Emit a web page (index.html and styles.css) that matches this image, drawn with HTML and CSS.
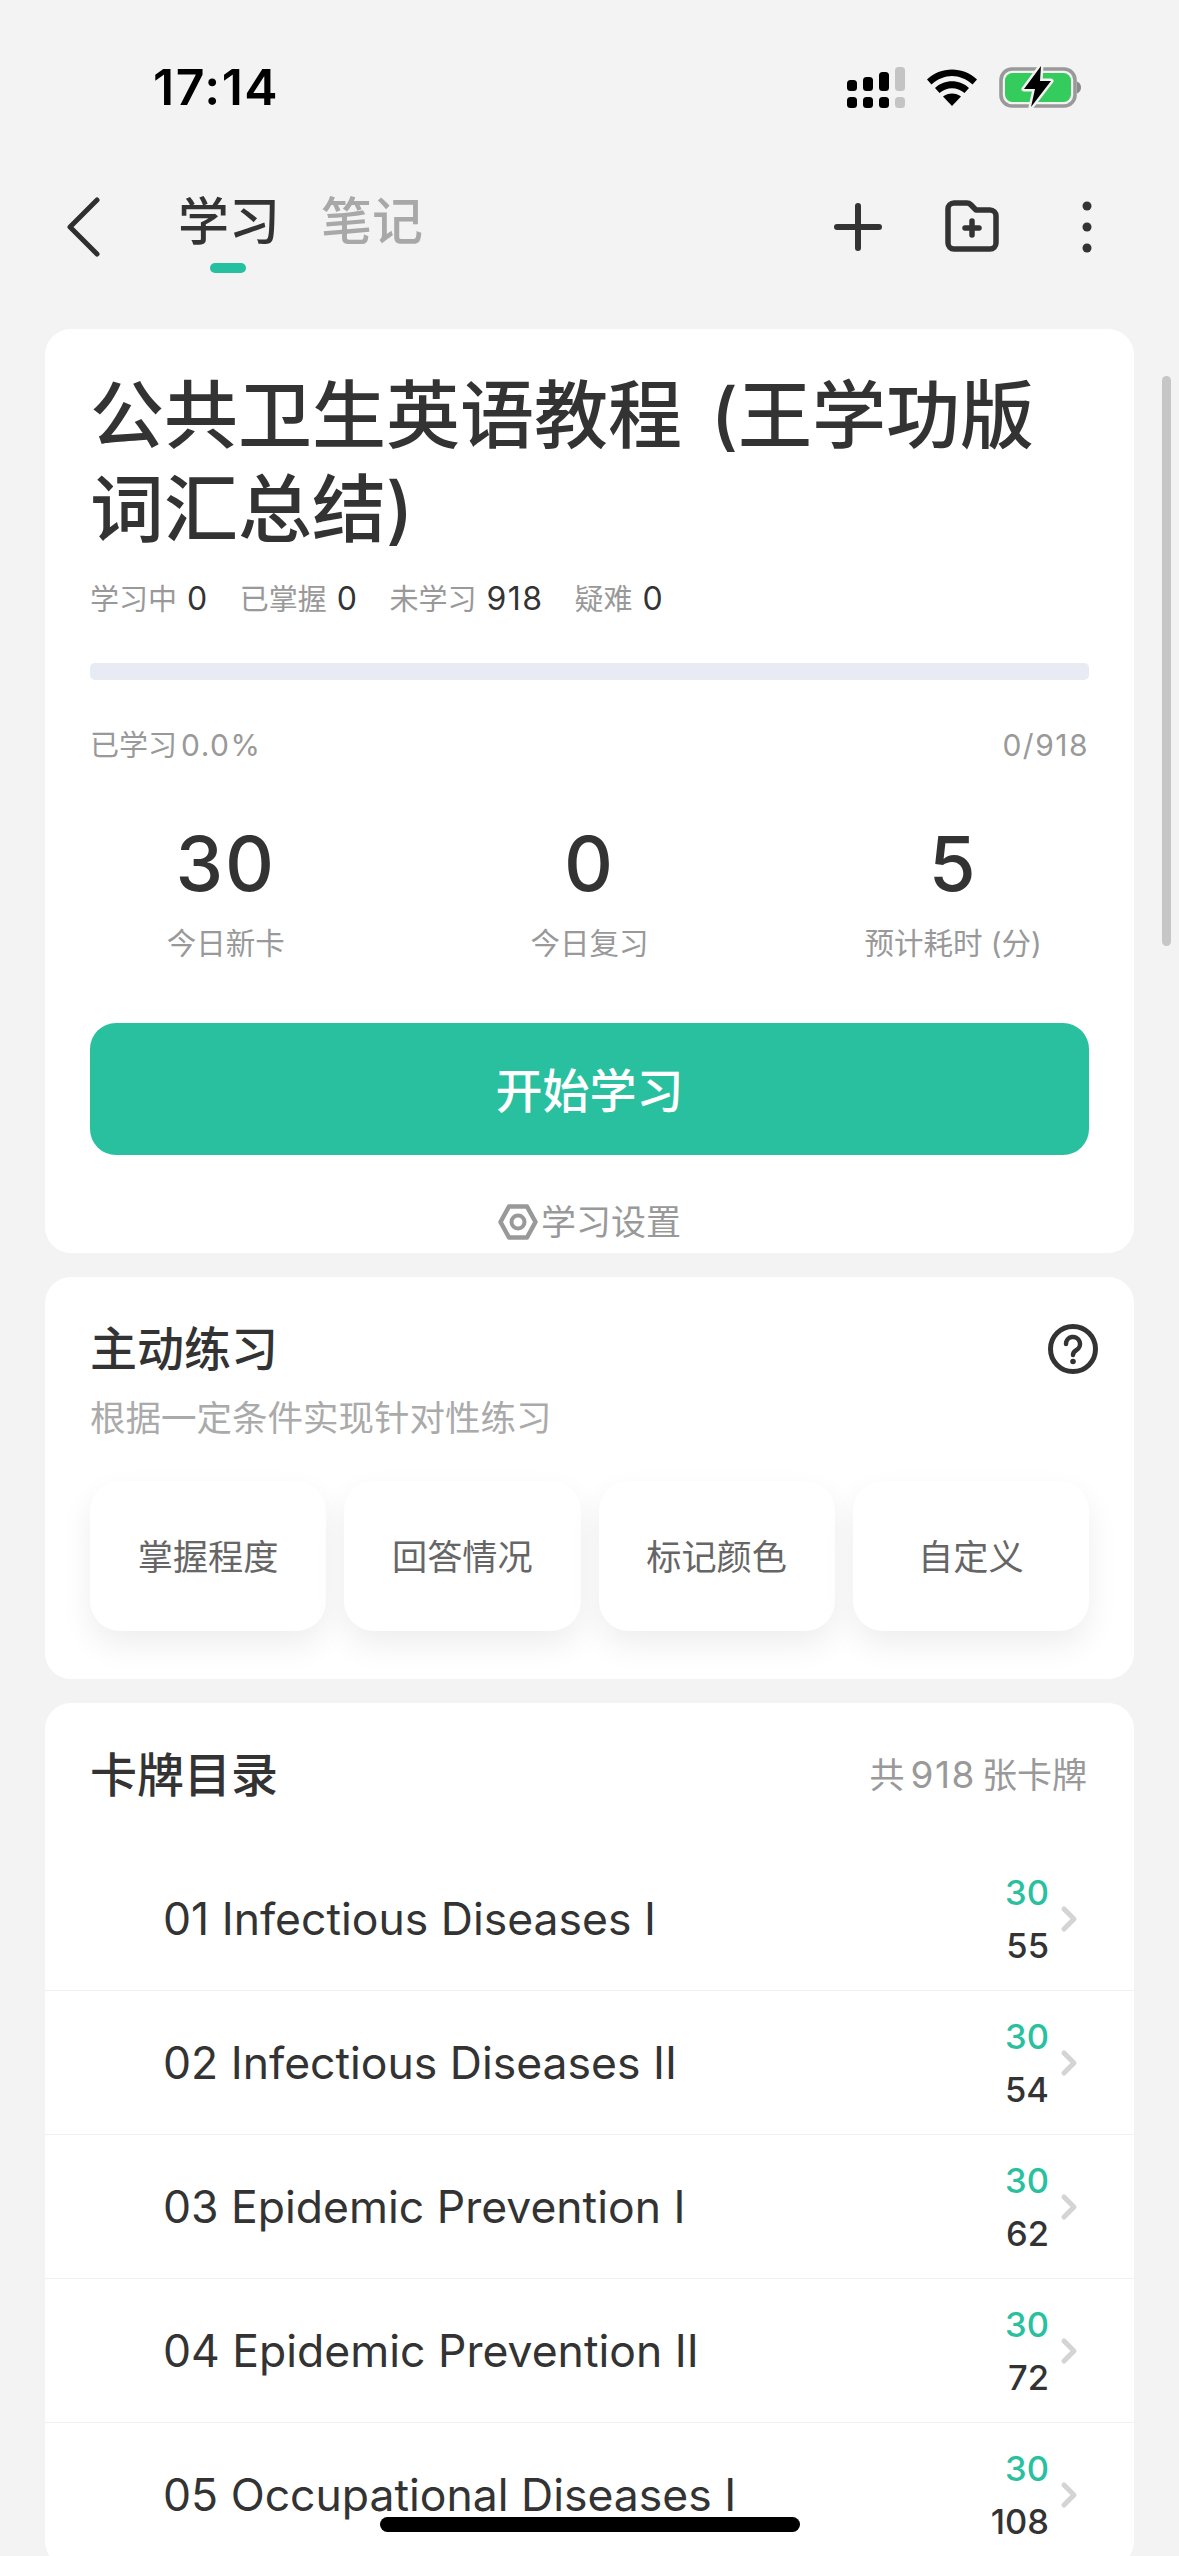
FILE: index.html
```html
<!DOCTYPE html>
<html lang="zh-CN">
<head>
<meta charset="utf-8">
<title>学习</title>
<link rel="stylesheet" href="styles.css">
</head>
<body>
<div class="screen">
  <header class="status">
    <span class="time">17:14</span>
    <div class="status-icons">
      <svg width="58" height="41" viewBox="0 0 58 41"><g fill="#000"><rect x="0" y="13" width="10" height="11" rx="3.5"/><rect x="16" y="10" width="10" height="14" rx="3.5"/><rect x="32" y="5" width="10" height="19" rx="3.5"/><rect x="0" y="30" width="10" height="11" rx="3.5"/><rect x="16" y="30" width="10" height="11" rx="3.5"/><rect x="32" y="30" width="10" height="11" rx="3.5"/></g><g fill="#c4c4c4"><rect x="48" y="0" width="10" height="24" rx="3.5"/><rect x="48" y="30" width="10" height="11" rx="3.5"/></g></svg>
      <svg width="50" height="37" viewBox="0 0 50 37"><g fill="#000"><path d="M0 10.500C13-3 37-3 50 10.500L45.500 15.500C33 4 17 4 4.500 15.500Z"/><path d="M8 19C17 10 33 10 42 19L37.500 24C30 17.500 20 17.500 12.500 24Z"/><path d="M16 27.500C21 23.500 29 23.500 34 27.500L25 37Z"/></g></svg>
      <svg width="82" height="43" viewBox="0 0 82 43"><rect x="2" y="3" width="74" height="37" rx="11" fill="none" stroke="#999" stroke-width="3.6"/><rect x="6" y="7" width="66" height="29" rx="7.5" fill="#34cc5c"/><path d="M78 15.500c2.500 1 4 3 4 6s-1.500 5-4 6z" fill="#8a8a8a"/><path d="M42 0 25 23h11l-4 18 20-26H41z" fill="#000" stroke="#f3f3f3" stroke-width="5" paint-order="stroke" stroke-linejoin="round"/></svg>
    </div>
  </header>

  <nav class="nav">
    <svg class="back" width="36" height="60" viewBox="0 0 36 60"><path d="M31 3 4 30l27 27" fill="none" stroke="#2f2f2f" stroke-width="5" stroke-linecap="round" stroke-linejoin="round"/></svg>
    <div class="tabs">
      <span class="tab tab-active">学习</span>
      <span class="tab">笔记</span>
    </div>
    <div class="nav-actions">
      <svg width="52" height="52" viewBox="0 0 52 52"><path d="M26 5v42M5 26h42" stroke="#333" stroke-width="6" stroke-linecap="round"/></svg>
      <svg width="54" height="54" viewBox="0 0 54 54"><path d="M3 9a6 6 0 0 1 6-6h13a5 5 0 0 1 3.600 1.500L31 10h14a6 6 0 0 1 6 6v27a6 6 0 0 1-6 6H9a6 6 0 0 1-6-6z" fill="none" stroke="#333" stroke-width="5.500" stroke-linejoin="round"/><path d="M27 21v14M20 28h14" stroke="#333" stroke-width="5.500" stroke-linecap="round"/></svg>
      <svg width="54" height="54" viewBox="0 0 54 54"><g fill="#333"><circle cx="27" cy="6" r="4.500"/><circle cx="27" cy="27" r="4.500"/><circle cx="27" cy="48" r="4.500"/></g></svg>
    </div>
  </nav>

  <main class="content">
    <section class="card card-study">
      <h1 class="title">公共卫生英语教程 (王学功版词汇总结)</h1>
      <div class="counts">
        <span class="count">学习中<b>0</b></span>
        <span class="count">已掌握<b>0</b></span>
        <span class="count">未学习<b>918</b></span>
        <span class="count">疑难<b>0</b></span>
      </div>
      <div class="progress"></div>
      <div class="progress-label"><span>已学习<span class="digits">0.0%</span></span><span class="digits">0/918</span></div>
      <div class="stats">
        <div class="stat"><div class="stat-num">30</div><div class="stat-label">今日新卡</div></div>
        <div class="stat"><div class="stat-num">0</div><div class="stat-label">今日复习</div></div>
        <div class="stat"><div class="stat-num">5</div><div class="stat-label">预计耗时 (分)</div></div>
      </div>
      <button class="start">开始学习</button>
      <div class="settings">
        <svg width="40" height="36" viewBox="0 0 40 36"><path d="M11 2.500h18L37.500 18 29 33.500H11L2.500 18z" fill="none" stroke="#999" stroke-width="4.500" stroke-linejoin="round"/><circle cx="20" cy="18" r="6.500" fill="none" stroke="#999" stroke-width="4"/></svg>
        <span>学习设置</span>
      </div>
    </section>

    <section class="card card-practice">
      <div class="head-row">
        <h2 class="heading">主动练习</h2>
        <svg class="help" width="50" height="50" viewBox="0 0 50 50"><circle cx="25" cy="25" r="22.500" fill="none" stroke="#333" stroke-width="5"/><path d="M18 20a7 7 0 1 1 10.500 6c-2.200 1.300-3.500 2.500-3.500 5" fill="none" stroke="#333" stroke-width="4.500" stroke-linecap="round"/><circle cx="25" cy="37.500" r="2.800" fill="#333"/></svg>
      </div>
      <p class="sub">根据一定条件实现针对性练习</p>
      <div class="tiles">
        <div class="tile">掌握程度</div>
        <div class="tile">回答情况</div>
        <div class="tile">标记颜色</div>
        <div class="tile">自定义</div>
      </div>
    </section>

    <section class="card card-list">
      <div class="head-row">
        <h2 class="heading">卡牌目录</h2>
        <span class="total">共<span class="total-num">918</span>张卡牌</span>
      </div>
      <ul class="decks">
        <li class="deck"><span class="deck-name">01 Infectious Diseases I</span><span class="nums"><span class="new">30</span><span class="all">55</span></span><svg class="chev" width="18" height="28" viewBox="0 0 18 28"><path d="M4 4l10 10L4 24" fill="none" stroke="#d4d4d4" stroke-width="5" stroke-linecap="round" stroke-linejoin="round"/></svg></li>
        <li class="deck"><span class="deck-name">02 Infectious Diseases II</span><span class="nums"><span class="new">30</span><span class="all">54</span></span><svg class="chev" width="18" height="28" viewBox="0 0 18 28"><path d="M4 4l10 10L4 24" fill="none" stroke="#d4d4d4" stroke-width="5" stroke-linecap="round" stroke-linejoin="round"/></svg></li>
        <li class="deck"><span class="deck-name">03 Epidemic Prevention I</span><span class="nums"><span class="new">30</span><span class="all">62</span></span><svg class="chev" width="18" height="28" viewBox="0 0 18 28"><path d="M4 4l10 10L4 24" fill="none" stroke="#d4d4d4" stroke-width="5" stroke-linecap="round" stroke-linejoin="round"/></svg></li>
        <li class="deck"><span class="deck-name">04 Epidemic Prevention II</span><span class="nums"><span class="new">30</span><span class="all">72</span></span><svg class="chev" width="18" height="28" viewBox="0 0 18 28"><path d="M4 4l10 10L4 24" fill="none" stroke="#d4d4d4" stroke-width="5" stroke-linecap="round" stroke-linejoin="round"/></svg></li>
        <li class="deck"><span class="deck-name">05 Occupational Diseases I</span><span class="nums"><span class="new">30</span><span class="all">108</span></span><svg class="chev" width="18" height="28" viewBox="0 0 18 28"><path d="M4 4l10 10L4 24" fill="none" stroke="#d4d4d4" stroke-width="5" stroke-linecap="round" stroke-linejoin="round"/></svg></li>
      </ul>
    </section>
  </main>

  <div class="scrollbar"></div>
  <div class="home-indicator"></div>
</div>
</body>
</html>
```

FILE: styles.css
```css
* { box-sizing: border-box; }
html, body { margin: 0; padding: 0; }
body {
  background: #f3f3f3;
  color: #333;
  font-family: Inter, "Noto Sans CJK SC", "Noto Sans", sans-serif;
}
svg { display: block; flex: none; }
h1, h2, p, ul { margin: 0; padding: 0; }
ul { list-style: none; }

.screen {
  position: relative;
  width: 1179px;
  height: 2556px;
  overflow: hidden;
  background: #f3f3f3;
}

/* status bar */
.status {
  height: 150px;
  padding: 60px 98px 0 153px;
  display: flex;
  justify-content: space-between;
  align-items: flex-start;
}
.time {
  font-size: 50px;
  line-height: 54px;
  font-weight: 600;
  color: #000;
  letter-spacing: 1.5px;
}
.status-icons {
  display: flex;
  align-items: center;
  gap: 22px;
  height: 55px;
}

/* nav */
.nav {
  height: 154px;
  padding: 0 65px 0 66px;
  display: flex;
  align-items: center;
}
.tabs {
  display: flex;
  gap: 41px;
  margin-left: 76px;
  padding-bottom: 10px;
}
.tab {
  position: relative;
  font-size: 51px;
  line-height: 60px;
  font-weight: 500;
  color: #a8a8a8;
}
.tab-active { color: #333; }
.tab-active::after {
  content: "";
  position: absolute;
  left: 32px;
  top: 71px;
  width: 36px;
  height: 10px;
  border-radius: 5px;
  background: #25c09f;
}
.nav-actions {
  margin-left: auto;
  display: flex;
  align-items: center;
  gap: 61px;
}

/* cards */
.content {
  padding: 25px 45px 0;
  display: flex;
  flex-direction: column;
  gap: 24px;
}
.card {
  background: #fff;
  border-radius: 26px;
}
.card-study { padding: 39px 45px 6px; }
.card-practice { padding: 42px 45px 48px; }
.card-list { padding: 42px 0 0; }

.title {
  font-size: 74px;
  line-height: 94px;
  font-weight: 500;
  word-spacing: 9px;
  color: #333;
}
.counts {
  margin-top: 23px;
  display: flex;
  gap: 31px;
  font-size: 29px;
  line-height: 40px;
  color: #999;
}
.count b {
  margin-left: 10px;
  font-size: 32px;
  font-weight: 400;
  letter-spacing: 1.5px;
  color: #333;
}
.progress {
  margin-top: 43px;
  height: 17px;
  border-radius: 5px;
  background: #e8ebf4;
}
.progress-label {
  margin-top: 45px;
  display: flex;
  justify-content: space-between;
  font-size: 29px;
  line-height: 40px;
  color: #999;
}
.digits {
  margin-left: 4px;
  font-size: 30px;
  letter-spacing: 1.5px;
}
.stats {
  margin-top: 52px;
  display: grid;
  grid-template-columns: repeat(3, 1fr);
  margin-left: -46px;
  margin-right: -46px;
}
.stat { text-align: center; }
.stat-num {
  font-size: 76px;
  line-height: 90px;
  font-weight: 500;
  letter-spacing: 2px;
}
.stat-label {
  margin-top: 15px;
  font-size: 29.500px;
  line-height: 40px;
  color: #999;
}
.start {
  display: block;
  width: 100%;
  height: 132px;
  margin-top: 60px;
  padding: 0 0 4px;
  border: 0;
  border-radius: 26px;
  background: #29c09f;
  color: #fff;
  font-family: inherit;
  font-size: 47px;
  font-weight: 500;
}
.settings {
  margin-top: 42px;
  height: 50px;
  display: flex;
  justify-content: center;
  align-items: center;
  gap: 3px;
  font-size: 35px;
  line-height: 50px;
  color: #999;
}

.head-row {
  display: flex;
  justify-content: space-between;
  align-items: center;
  height: 60px;
}
.card-list .head-row { padding: 0 47px 0 45px; }
.heading {
  font-size: 47px;
  line-height: 60px;
  font-weight: 500;
  color: #333;
}
.help { margin-right: -9px; }
.sub {
  margin-top: 15px;
  font-size: 35.500px;
  line-height: 50px;
  color: #aaa;
}
.tiles {
  margin-top: 37px;
  display: grid;
  grid-template-columns: repeat(4, 1fr);
  gap: 18px;
}
.tile {
  height: 150px;
  padding-bottom: 3px;
  display: flex;
  align-items: center;
  justify-content: center;
  border-radius: 30px;
  background: #fff;
  box-shadow: 0 14px 32px rgba(0, 0, 0, 0.07);
  font-size: 35.200px;
  color: #666;
}
.total {
  font-size: 35px;
  line-height: 60px;
  color: #999;
}
.total-num {
  margin: 0 6px;
  font-size: 37px;
  letter-spacing: 1.500px;
}

.decks { margin-top: 42px; }
.deck {
  height: 144px;
  padding: 0 56px 0 118px;
  display: flex;
  align-items: center;
  border-bottom: 1px solid #f1f1f1;
}
.deck-name {
  flex: 1;
  font-size: 44.500px;
  line-height: 60px;
  color: #333;
}
.nums {
  display: flex;
  flex-direction: column;
  align-items: flex-end;
  font-size: 34.500px;
  line-height: 53px;
  font-weight: 500;
}
.new { color: #29c09f; }
.all { color: #333; }
.chev { margin-left: 11px; }

/* overlays */
.scrollbar {
  position: absolute;
  left: 1162px;
  top: 376px;
  width: 9px;
  height: 570px;
  border-radius: 5px;
  background: #c6c6c6;
}
.home-indicator {
  position: absolute;
  left: 380px;
  top: 2517px;
  width: 420px;
  height: 15px;
  border-radius: 8px;
  background: #000;
}
```
